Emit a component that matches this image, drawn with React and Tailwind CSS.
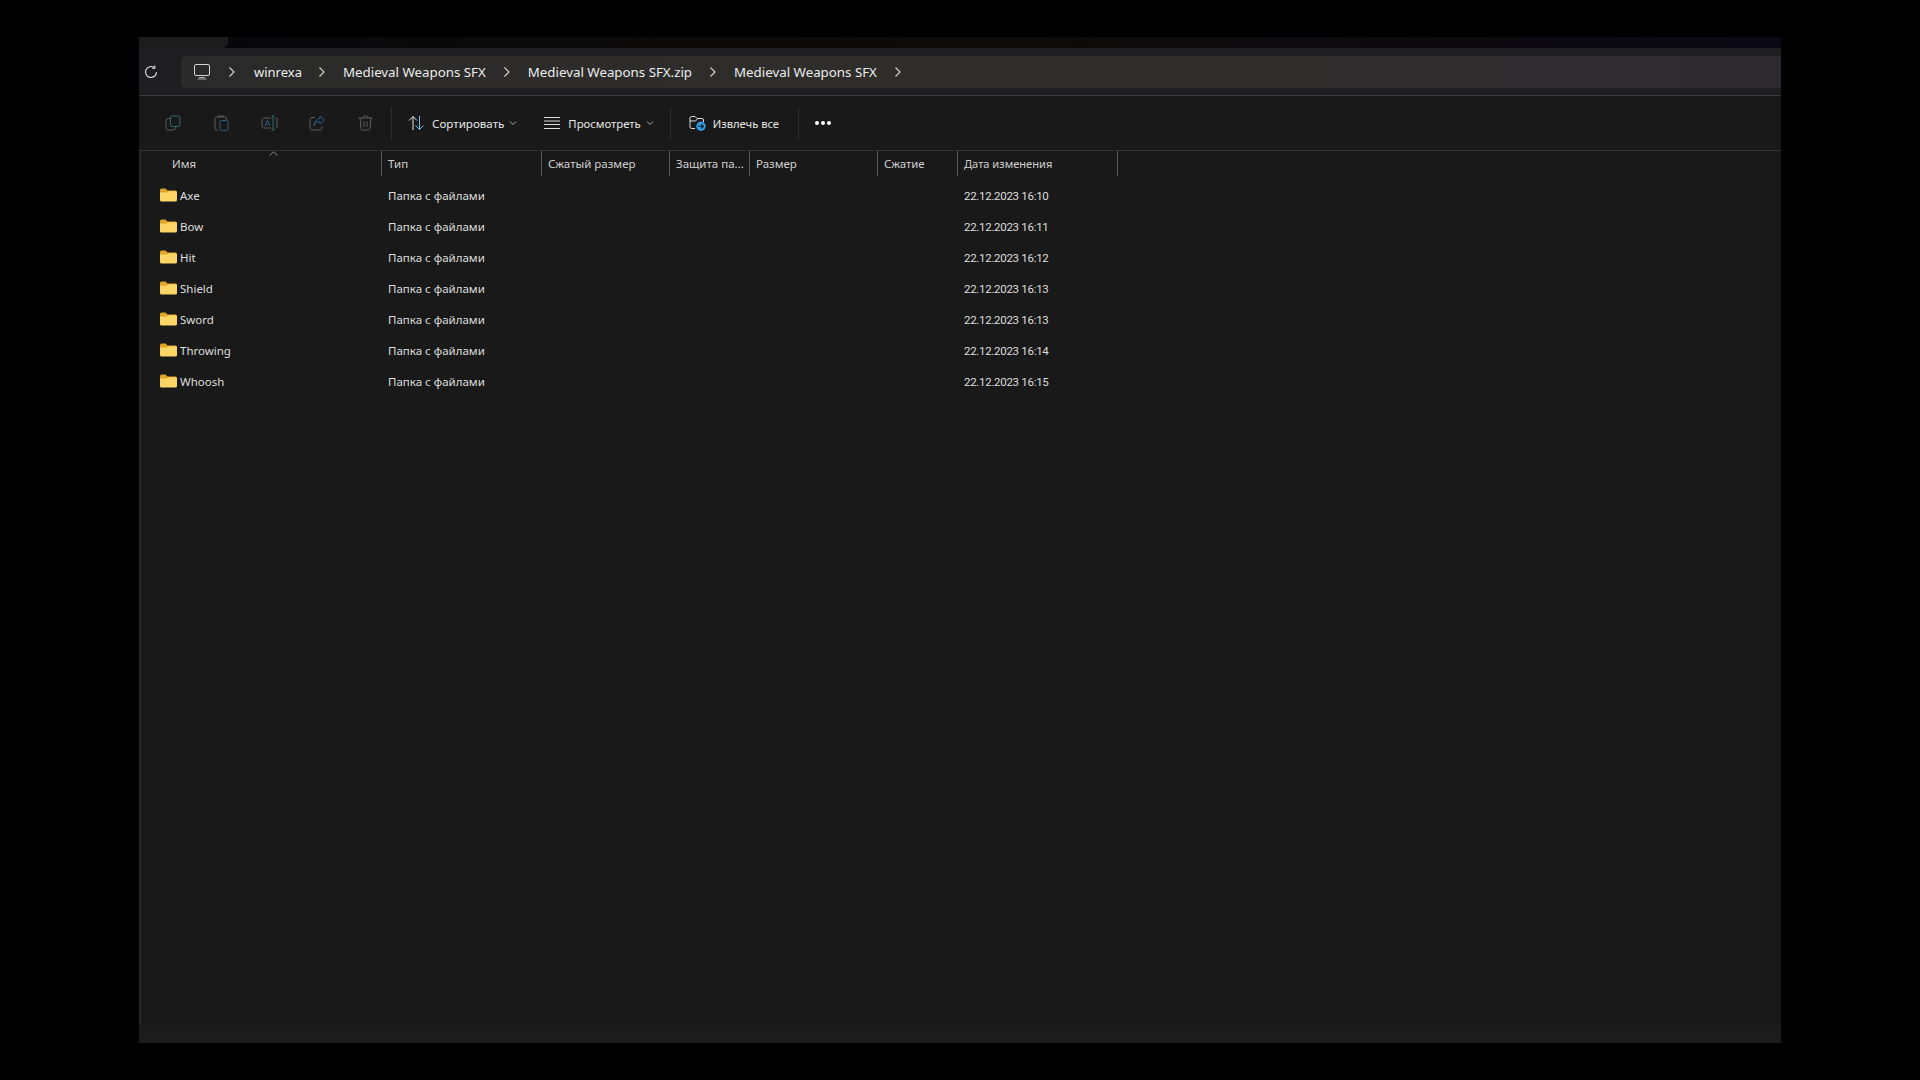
import React from "react";

function Chevron({ className = "" }) {
  return (
    <svg width="8" height="12" viewBox="0 0 8 12" fill="none" className={`shrink-0 ${className}`}>
      <path d="M1.500 1.500 6 6l-4.500 4.500" stroke="#d8d8d8" strokeWidth="1.100" />
    </svg>
  );
}

function Folder() {
  return (
    <svg width="17" height="14" viewBox="0 0 17 14" className="shrink-0">
      <path d="M0 2a1.500 1.500 0 0 1 1.500-1.500h4L7.500 2.500H15.500A1.500 1.500 0 0 1 17 4v3H0Z" fill="#e0a526" />
      <path d="M0 4.500 h6.500 L8.500 3.200 H15.500 A1.500 1.500 0 0 1 17 4.700 V12 A1.500 1.500 0 0 1 15.500 13.500 H1.500 A1.500 1.500 0 0 1 0 12Z" fill="#fbd667" />
    </svg>
  );
}

const Crumb = ({ children, className = "mr-[17px] text-[13.3px]" }) => (
  <span className={`whitespace-nowrap pt-[2px] text-[#ececec] ${className}`}>{children}</span>
);

function CopyIcon() {
  return (
    <svg width="16" height="16" viewBox="0 0 16 16" fill="none">
      <rect x="5.500" y="1" width="9.500" height="10.500" rx="2" stroke="#2c6a66" />
      <path d="M5 3.500H3A2 2 0 0 0 1 5.500V13a2 2 0 0 0 2 2h5.500a2 2 0 0 0 2-2v-1" stroke="#5a5a5a" />
    </svg>
  );
}
function PasteIcon() {
  return (
    <svg width="15" height="16" viewBox="0 0 15 16" fill="none">
      <path d="M4 15H2.500A1.500 1.500 0 0 1 1 13.500V3.500A1.500 1.500 0 0 1 2.500 2H11A1.500 1.500 0 0 1 12.500 3.500V5" stroke="#5c5c5c" />
      <path d="M4 2V1h5.500v1" stroke="#5c5c5c" />
      <rect x="6" y="5.500" width="8" height="10" rx="1.500" stroke="#2d5a78" />
    </svg>
  );
}
function RenameIcon() {
  return (
    <svg width="17" height="16" viewBox="0 0 17 16" fill="none">
      <path d="M10 3H2.500A1.500 1.500 0 0 0 1 4.500v7A1.500 1.500 0 0 0 2.500 13H10" stroke="#5c5c5c" />
      <path d="M14 3h.5A1.500 1.500 0 0 1 16 4.500v7a1.500 1.500 0 0 1-1.500 1.500H14" stroke="#5c5c5c" />
      <path d="M10.500 1H12m1.500 0H12m0 0v14m-1.500 0H12m1.500 0H12" stroke="#2c6a66" />
      <path d="M4 11 6.500 5 9 11M5 9h3" stroke="#2d5a88" />
    </svg>
  );
}
function ShareIcon() {
  return (
    <svg width="16" height="16" viewBox="0 0 16 16" fill="none">
      <path d="M6 2.500H3A2 2 0 0 0 1 4.500V13a2 2 0 0 0 2 2h8a2 2 0 0 0 2-2v-2" stroke="#5c5c5c" />
      <path d="M5 11c.5-3 3-4.500 6-4.500V9l4.500-4L11 1v2.500C7.500 4 5 7 5 11Z" stroke="#2d5a88" />
    </svg>
  );
}
function TrashIcon() {
  return (
    <svg width="15" height="16" viewBox="0 0 15 16" fill="none" stroke="#5e5e5e">
      <path d="M0.500 3H14.500M5 3V2.200A1.500 1.500 0 0 1 6.500 1h2A1.500 1.500 0 0 1 10 2.200V3" />
      <path d="M2 3l1 10.700A1.500 1.500 0 0 0 4.500 15h6a1.500 1.500 0 0 0 1.500-1.300L13 3" />
      <path d="M6 6.500v5.500M9 6.500v5.500" />
    </svg>
  );
}
function SortIcon() {
  return (
    <svg width="17" height="16" viewBox="0 0 17 16" fill="none">
      <path d="M5 15V1.500M1 5.500l4-4 4 4" stroke="#e4e4e4" />
      <path d="M11.500 1v13.500M7.500 10.500l4 4 4-4" stroke="#5cc0ee" />
    </svg>
  );
}
function ViewIcon() {
  return (
    <svg width="16" height="12" viewBox="0 0 16 12" fill="none" stroke="#dcdcdc" strokeWidth="1">
      <path d="M0 .5h16M0 4h16M0 7.500h16M0 11.500h16" />
    </svg>
  );
}
function ExtractIcon() {
  return (
    <svg width="17" height="16" viewBox="0 0 17 16" fill="none">
      <path d="M6 13.500H2.500A1.500 1.500 0 0 1 1 12V3A1.500 1.500 0 0 1 2.500 1.500H6L8 3.500h5A1.500 1.500 0 0 1 14.500 5v2" stroke="#dcdcdc" />
      <path d="M1 6h5.500L8.500 4" stroke="#dcdcdc" />
      <circle cx="12" cy="11.300" r="4.700" fill="#2f9be0" />
      <path d="M9.500 11.300h4.500M12.300 9.300l2 2-2 2" stroke="#10161c" strokeWidth="1.100" />
    </svg>
  );
}
function DownCaret() {
  return (
    <svg width="8" height="6" viewBox="0 0 8 6" fill="none">
      <path d="M1 1.500 4 4.500l3-3" stroke="#a8a8a8" />
    </svg>
  );
}

const columns = [
  { title: "Имя", w: "w-[241px]", pl: "pl-[31px]", size: "text-[11.5px]" },
  { title: "Тип", w: "w-[160px]", pl: "pl-[6px]", size: "text-[11.5px]" },
  { title: "Сжатый размер", w: "w-[128px]", pl: "pl-[6px]", size: "text-[11.5px]" },
  { title: "Защита па...", w: "w-[80px]", pl: "pl-[6px]", size: "text-[11.5px]" },
  { title: "Размер", w: "w-[128px]", pl: "pl-[6px]", size: "text-[11.5px]" },
  { title: "Сжатие", w: "w-[80px]", pl: "pl-[6px]", size: "text-[11.4px]" },
  { title: "Дата изменения", w: "w-[160px]", pl: "pl-[6px] pt-[1px]", size: "text-[11.1px]" },
];

const rows = [
  ["Axe", "22.12.2023 16:10"],
  ["Bow", "22.12.2023 16:11"],
  ["Hit", "22.12.2023 16:12"],
  ["Shield", "22.12.2023 16:13"],
  ["Sword", "22.12.2023 16:13"],
  ["Throwing", "22.12.2023 16:14"],
  ["Whoosh", "22.12.2023 16:15"],
];

export default function App() {
  return (
    <div className="min-h-screen bg-black pl-[139px] pt-[37px] font-['Noto_Sans','Open_Sans',sans-serif]">
      <div className="flex h-[1006px] w-[1642px] flex-col bg-[#191919]">
        {/* top strip */}
        <div className="flex h-[11px] shrink-0 bg-gradient-to-r from-[#07070a] via-[#0d0b08] to-[#0a0812]">
          <div className="h-full w-[89px] rounded-br-[6px] bg-[#1c1c1c]" />
        </div>

        {/* address row */}
        <div className="flex h-[48px] shrink-0 items-center border-b border-[#3c3c3c] bg-[#1e1e20]">
          <div className="flex w-[42px] shrink-0 justify-center pr-[19px]">
            <svg width="14" height="14" viewBox="0 0 14 14" fill="none">
              <path d="M12.500 7A5.500 5.500 0 1 1 10.300 2.600" stroke="#e0e0e0" strokeWidth="1.100" />
              <path d="M10.800 0.500v2.800H8" stroke="#e0e0e0" strokeWidth="1.100" />
            </svg>
          </div>
          <div className="flex h-[32px] flex-1 items-center rounded-l-[6px] bg-gradient-to-r from-[#2a2a2a] via-[#302e2a] to-[#2e2b30] pl-[13px]">
            <svg width="16" height="16" viewBox="0 0 16 16" fill="none" className="mr-[18px] shrink-0">
              <rect x="0.500" y="0.500" width="15" height="11" rx="1.500" stroke="#d4d4d4" />
              <path d="M5 13.500h6M3.500 15h9" stroke="#a8a8a8" strokeWidth="1.200" />
            </svg>
            <Chevron className="mr-[18px]" />
            <Crumb className="mr-[16px] text-[13px]">winrexa</Crumb>
            <Chevron className="mr-[17px]" />
            <Crumb>Medieval Weapons SFX</Crumb>
            <Chevron className="mr-[17px]" />
            <Crumb>Medieval Weapons SFX.zip</Crumb>
            <Chevron className="mr-[17px]" />
            <Crumb>Medieval Weapons SFX</Crumb>
            <Chevron />
          </div>
        </div>

        {/* toolbar */}
        <div className="flex h-[55px] shrink-0 items-center border-b border-[#333333] pl-[18px]">
          <div className="flex w-[32px] justify-center"><CopyIcon /></div>
          <div className="ml-[16px] flex w-[32px] justify-center"><PasteIcon /></div>
          <div className="ml-[16px] flex w-[32px] justify-center"><RenameIcon /></div>
          <div className="ml-[16px] flex w-[32px] justify-center"><ShareIcon /></div>
          <div className="ml-[16px] flex w-[32px] justify-center"><TrashIcon /></div>
          <div className="ml-[10px] h-[32px] w-px bg-[#2e2e2e]" />
          <div className="ml-[16px] flex items-center text-[11.6px] text-[#e6e6e6]">
            <SortIcon />
            <span className="ml-[7px] pt-[1px]">Сортировать</span>
            <span className="ml-[5px]"><DownCaret /></span>
          </div>
          <div className="ml-[27px] flex items-center text-[11.3px] text-[#e6e6e6]">
            <ViewIcon />
            <span className="ml-[8px] pt-[2px]">Просмотреть</span>
            <span className="ml-[5px]"><DownCaret /></span>
          </div>
          <div className="ml-[16px] h-[32px] w-px bg-[#2e2e2e]" />
          <div className="ml-[18px] flex items-center text-[11.2px] text-[#e6e6e6]">
            <ExtractIcon />
            <span className="ml-[7px] pt-[2px]">Извлечь все</span>
          </div>
          <div className="ml-[19px] h-[32px] w-px bg-[#2e2e2e]" />
          <div className="ml-[16px] flex gap-[2px]">
            <span className="size-[4px] rounded-full bg-white" />
            <span className="size-[4px] rounded-full bg-white" />
            <span className="size-[4px] rounded-full bg-white" />
          </div>
        </div>

        {/* list */}
        <div className="relative flex flex-1 flex-col border-l-2 border-[#262626]">
          <svg width="9" height="5" viewBox="0 0 9 5" fill="none" className="absolute left-[128px] top-0">
            <path d="M.5 4.500 4.500.8l4 3.700" stroke="#8a8a8a" />
          </svg>
          <div className="flex h-[25px] shrink-0">
            {columns.map((c) => (
              <div
                key={c.title}
                className={`${c.w} ${c.pl} ${c.size} flex items-center whitespace-nowrap border-r border-[#585858] text-[#cfcfcf]`}
              >
                {c.title}
              </div>
            ))}
          </div>
          <div className="flex flex-col pt-[4px]">
            {rows.map(([name, date]) => (
              <div key={name} className="flex h-[31px] items-center text-[11.5px] text-[#dedede]">
                <div className="flex w-[241px] items-center pl-[19px]">
                  <span className="-mt-[2px]"><Folder /></span>
                  <span className="ml-[3px]">{name}</span>
                </div>
                <div className="w-[576px] pl-[6px]">Папка с файлами</div>
                <div className="pl-[6px] pt-[2px] font-['Roboto',sans-serif] tracking-[-0.3px]">{date}</div>
              </div>
            ))}
          </div>
        </div>

        {/* bottom strip */}
        <div className="h-[18px] shrink-0 bg-[#1c1c1c]" />
      </div>
    </div>
  );
}
